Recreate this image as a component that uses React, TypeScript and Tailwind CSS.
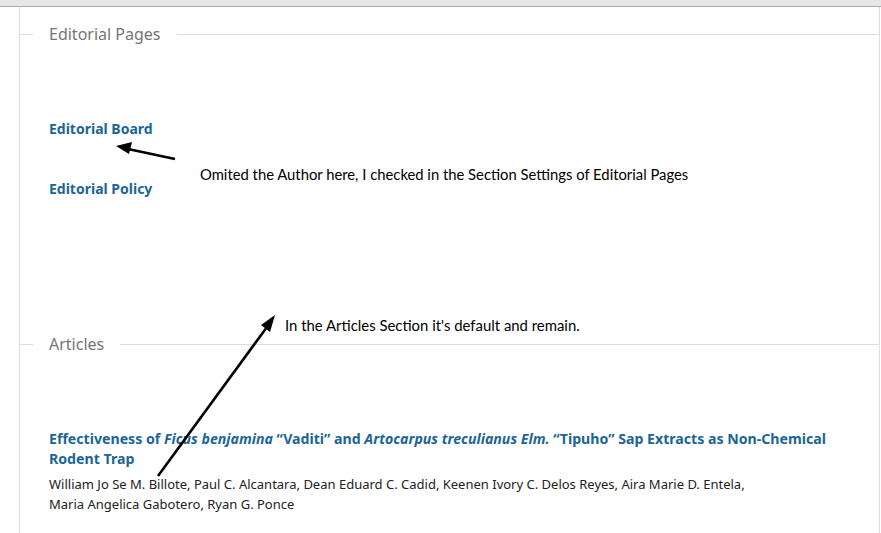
import React from 'react'

const SectionTitle = ({ title }: { title: string }) => {
  return (
    <div className="flex items-center h-6">
      <div className="w-[13px] border-t border-[#dddddd]" />
      <h2 className="px-4 text-[16px] leading-6 text-[#757575] font-normal">{title}</h2>
      <div className="flex-1 border-t border-[#dddddd]" />
    </div>
  )
}

const Arrows = () => {
  return (
    <svg className="absolute inset-0 pointer-events-none" width="881" height="533" viewBox="0 0 881 533">
      <line x1="175" y1="159" x2="128" y2="149" stroke="#000" strokeWidth="2.6" />
      <polygon points="116,146 132,142 129,154" fill="#000" />
      <line x1="158" y1="476" x2="267" y2="327" stroke="#000" strokeWidth="2.6" />
      <polygon points="275,315 270,332 261,325" fill="#000" />
    </svg>
  )
}

export default function App() {
  return (
    <div className="relative w-[881px] h-[533px] overflow-hidden bg-white" style={{ fontFamily: '"Noto Sans", sans-serif' }}>
      <div className="h-[7px] bg-[#e6e6e6] border-b border-[#a8a8a8]" />
      <div className="ml-[19px] w-[861px] h-[526px] border-x border-[#dddddd]">
        <div className="pt-[15px]">
          <SectionTitle title="Editorial Pages" />
          <div className="pl-[29px] mt-[73px] flex flex-col gap-10">
            <a className="text-[14px] leading-5 font-bold text-[#1b6597]">Editorial Board</a>
            <a className="text-[14px] leading-5 font-bold text-[#1b6597]">Editorial Policy</a>
          </div>
        </div>
        <div className="mt-[133px]">
          <SectionTitle title="Articles" />
          <div className="pl-[29px] mt-[73px]">
            <h3 className="text-[14.15px] leading-5 font-bold text-[#1b6597]">
              Effectiveness of <i>Ficus benjamina</i> “Vaditi” and <i>Artocarpus treculianus Elm.</i> “Tipuho” Sap Extracts as Non-Chemical
              <br />
              Rodent Trap
            </h3>
            <div className="mt-[5px] text-[13px] leading-5 text-[#222222]">
              William Jo Se M. Billote, Paul C. Alcantara, Dean Eduard C. Cadid, Keenen Ivory C. Delos Reyes, Aira Marie D. Entela,
              <br />
              Maria Angelica Gabotero, Ryan G. Ponce
            </div>
          </div>
        </div>
      </div>
      <p className="absolute left-[200px] top-[164px] text-[14.8px] leading-5 text-black" style={{ fontFamily: 'Lato, sans-serif' }}>
        Omited the Author here, I checked in the Section Settings of Editorial Pages
      </p>
      <p className="absolute left-[285px] top-[315px] text-[14.9px] leading-5 text-black" style={{ fontFamily: 'Lato, sans-serif' }}>
        In the Articles Section it's default and remain.
      </p>
      <Arrows />
    </div>
  )
}
